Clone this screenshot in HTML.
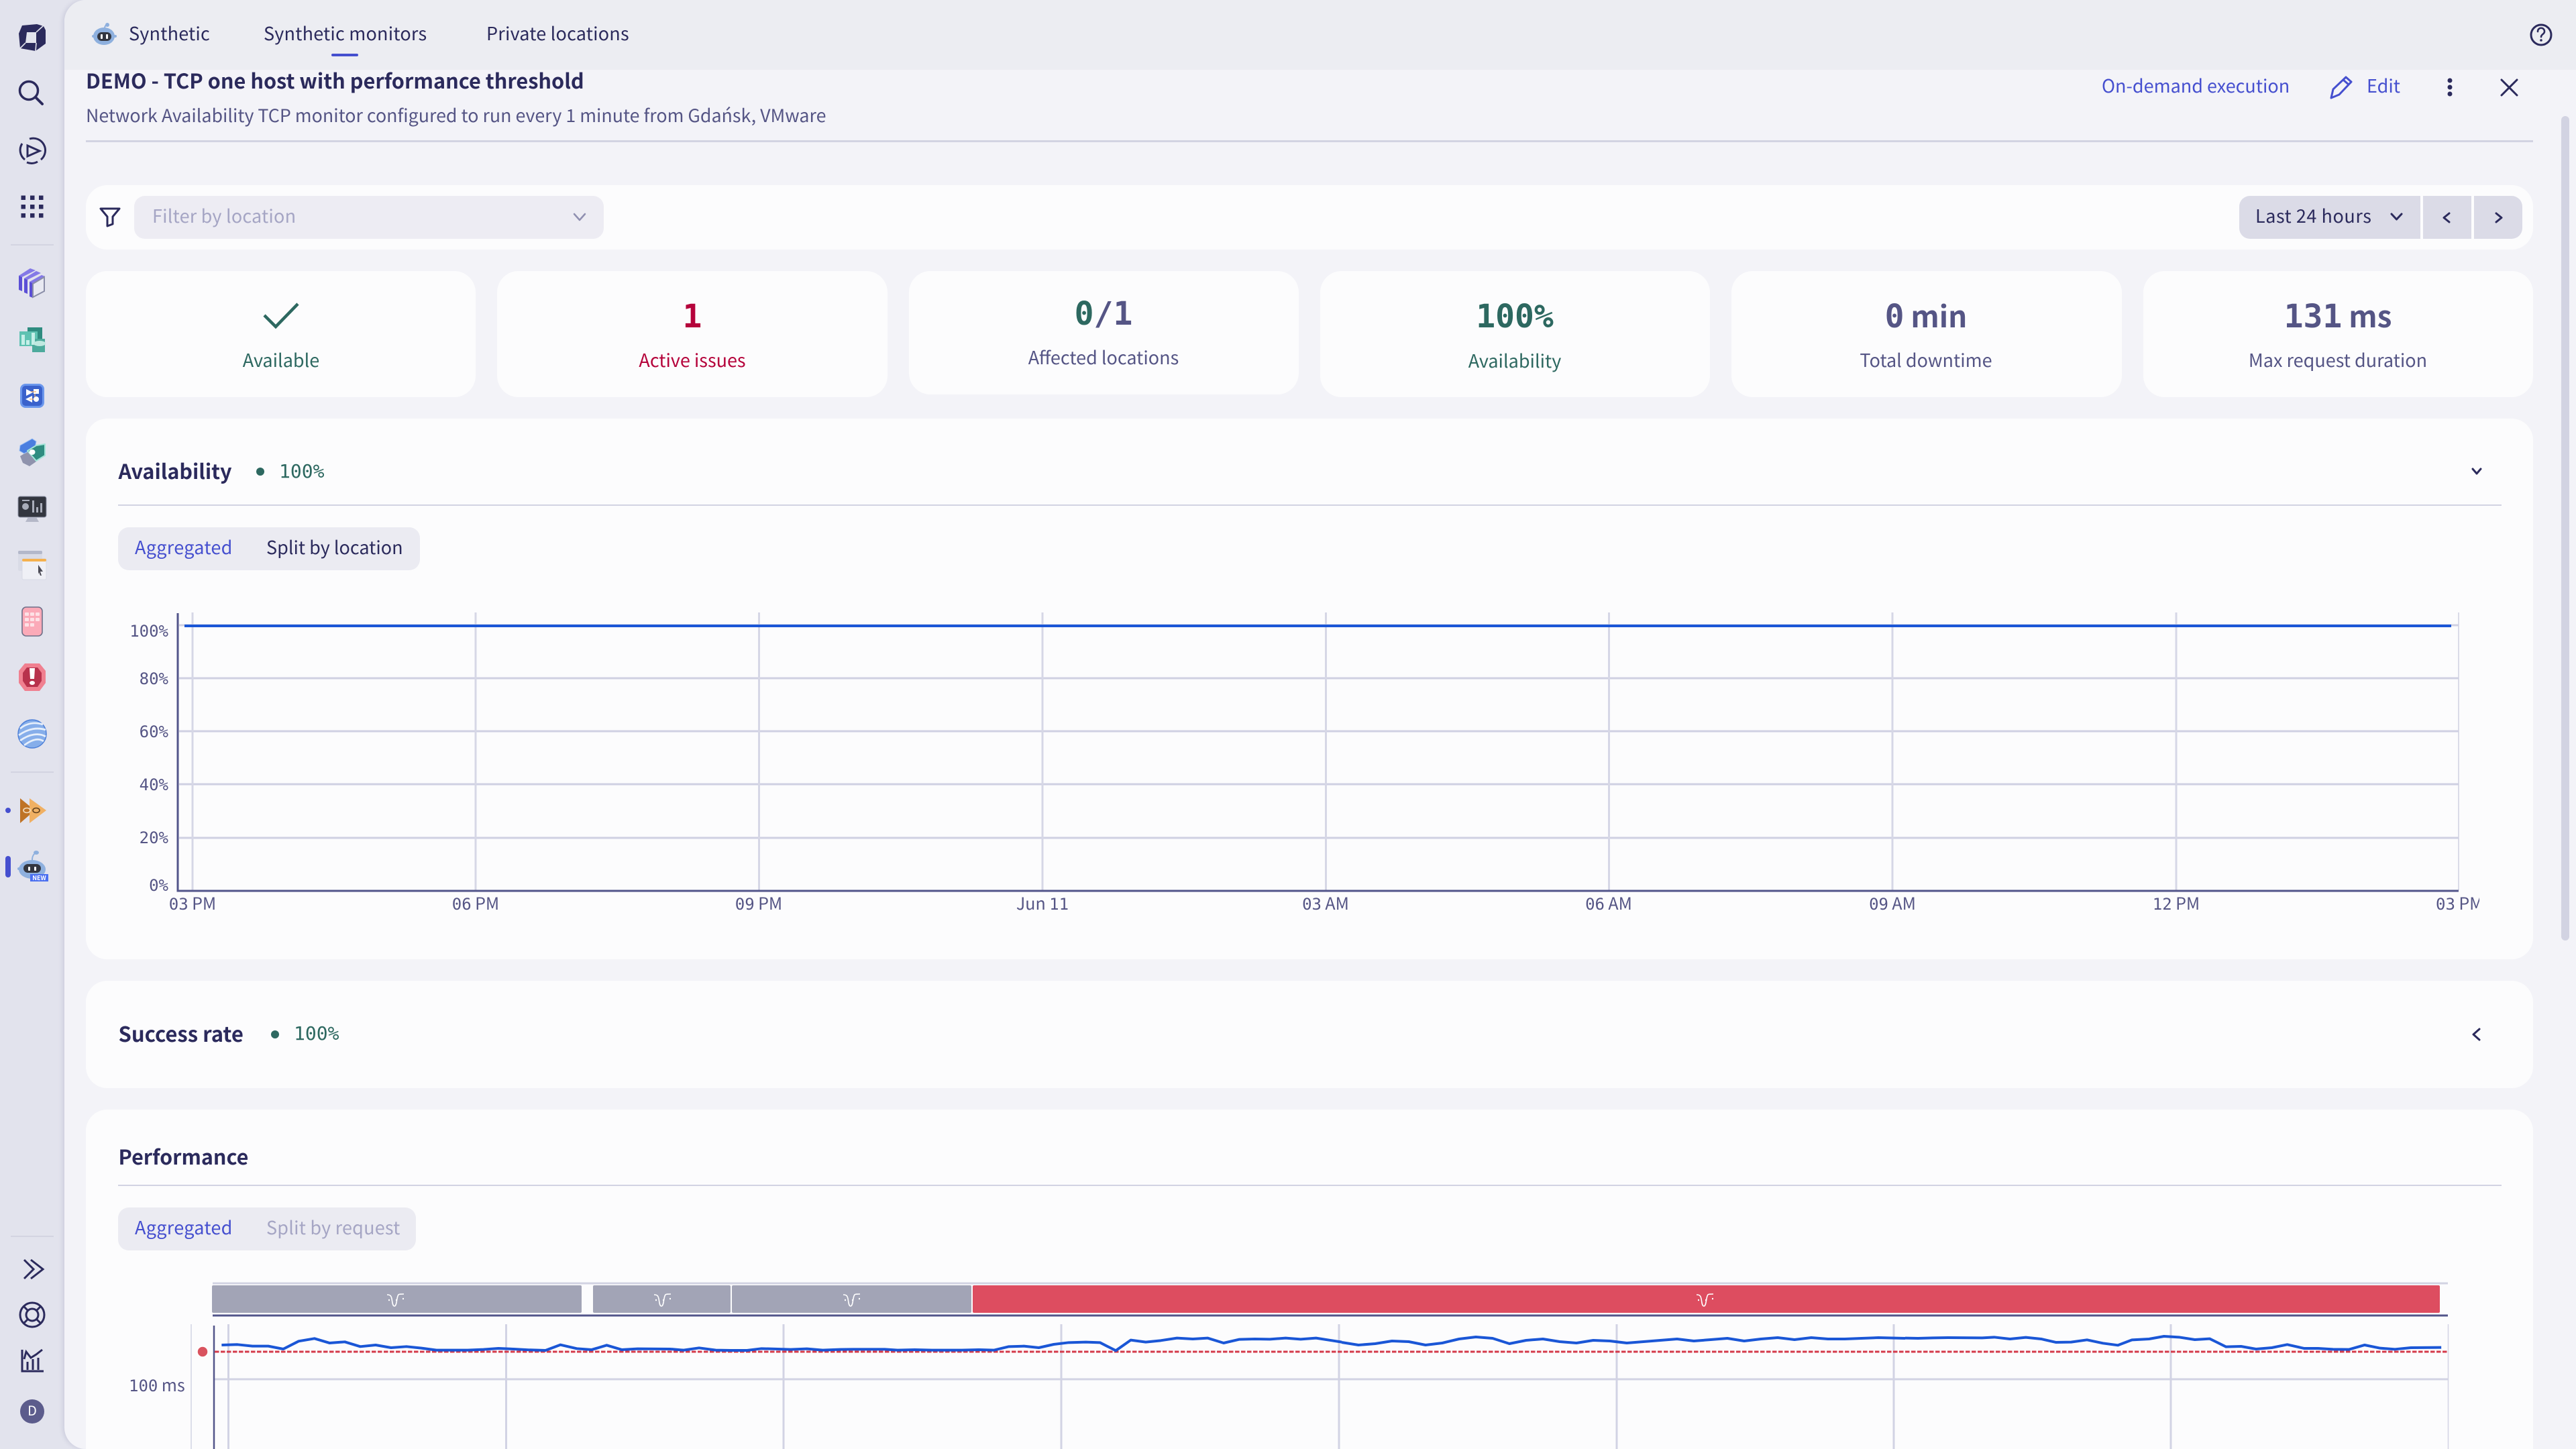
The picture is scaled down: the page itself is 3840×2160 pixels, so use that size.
<!DOCTYPE html>
<html lang="en">
<head>
<meta charset="utf-8">
<title>Synthetic</title>
<style>
html,body{margin:0;padding:0;width:3840px;height:2160px;overflow:hidden;background:#e2e3ed}
body{position:relative;font-family:"Noto Sans CJK JP","Liberation Sans",sans-serif;color:#2b2a5c}
.a{position:absolute}
#main{position:absolute;left:96px;top:0;width:3744px;height:2160px;background:#f3f3f8;border-radius:32px 0 0 32px;box-shadow:-3px 0 6px rgba(80,80,130,.13);overflow:hidden}
#top{position:absolute;left:96px;top:0;width:3744px;height:104px;background:#ecedf2;border-top-left-radius:32px}
.c{position:absolute;background:#fcfcfd;border-radius:32px}
.t{position:absolute;white-space:nowrap;line-height:36px;height:40px;font-size:27px}
.ctr{text-align:center;width:600px}
.b{font-weight:700}
.m{font-family:"DejaVu Sans Mono",monospace}
.p{color:#555585}.g{color:#2d6860}.r{color:#b5033b}.l{color:#454fcf}.d{color:#2b2a5c}.q{color:#a5a5c4}
.val{font-family:"DejaVu Sans Mono",monospace;font-weight:700;font-size:48px;line-height:60px;height:60px;word-spacing:-19px}
.al{font-family:"DejaVu Sans Mono",monospace;font-size:24px;line-height:30px;height:30px;color:#555585;word-spacing:-9px}
.al span,.val span.w{font-family:"Noto Sans CJK JP","Liberation Sans",sans-serif;line-height:0}
.al span{font-size:25px}
.val span.w{font-size:44px}
.pill{position:absolute;background:#ebebf2;border-radius:16px}
svg{position:absolute;overflow:visible}
</style>
</head>
<body>
<div id="main"></div>
<div id="top"></div>

<!-- cards -->
<div class="c" style="left:128px;top:276px;width:3648px;height:96px"></div>
<div class="a" style="left:200px;top:292px;width:700px;height:64px;background:#edecf3;border-radius:16px"></div>
<div class="a" style="left:3338px;top:292px;width:270px;height:64px;background:#dbdbe7;border-radius:16px 0 0 16px"></div>
<div class="a" style="left:3612px;top:292px;width:72px;height:64px;background:#dbdbe7"></div>
<div class="a" style="left:3688px;top:292px;width:72px;height:64px;background:#dbdbe7;border-radius:0 16px 16px 0"></div>
<div class="c" style="left:128px;top:404px;width:581.330px;height:188px"></div>
<div class="c" style="left:741.330px;top:404px;width:581.330px;height:188px"></div>
<div class="c" style="left:1354.670px;top:404px;width:581.330px;height:184px"></div>
<div class="c" style="left:1968px;top:404px;width:581.330px;height:188px"></div>
<div class="c" style="left:2581.330px;top:404px;width:581.330px;height:188px"></div>
<div class="c" style="left:3194.670px;top:404px;width:581.330px;height:188px"></div>
<div class="c" style="left:128px;top:624px;width:3648px;height:806px"></div>
<div class="c" style="left:128px;top:1462px;width:3648px;height:160px"></div>
<div class="a" style="left:128px;top:1654px;width:3648px;height:506px;background:#fcfcfd;border-radius:32px 32px 0 0"></div>
<div class="a" style="left:176px;top:752px;width:3553px;height:2px;background:#d2d3e2"></div>
<div class="a" style="left:176px;top:1766px;width:3553px;height:2px;background:#d2d3e2"></div>
<div class="pill" style="left:176px;top:786px;width:450px;height:64px"></div>
<div class="pill" style="left:176px;top:1800px;width:444px;height:64px"></div>
<div class="a" style="left:128px;top:209px;width:3648px;height:3px;background:#d2d3e2"></div>
<div class="a" style="left:3818px;top:173px;width:12px;height:1229px;background:#d2d3e2;border-radius:6px"></div>
<div class="a" style="left:494px;top:80px;width:40px;height:4px;background:#454fcf;border-radius:2px"></div>
<div class="a" style="left:382px;top:697px;width:12px;height:12px;border-radius:50%;background:#2d6860"></div>
<div class="a" style="left:404px;top:1536px;width:12px;height:12px;border-radius:50%;background:#2d6860"></div>

<svg style="left:0;top:0" width="3840" height="2160" viewBox="0 0 3840 2160">
  <!-- availability grid -->
  <g stroke="#cfd0e2" stroke-width="3" fill="none">
    <path d="M267 932H3665M267 1011H3665M267 1090H3665M267 1169H3665M267 1249H3665"/>
    <path stroke="#d6d7e6" d="M287 913V1327M709 913V1327M1131.500 913V1327M1554 913V1327M1976.500 913V1327M2398.500 913V1327M2821 913V1327M3244 913V1327"/>
    <path stroke-width="1.500" d="M3665 913V1327"/>
  </g>
  <path d="M265 914V1328H3665" fill="none" stroke="#52558a" stroke-width="3"/>
  <path d="M275 933H3654" stroke="#1a56d6" stroke-width="4"/>

  <!-- performance track -->
  <path d="M317 1913H3649" stroke="#d2d3e2" stroke-width="3"/>
  <rect x="316" y="1916" width="551" height="41" rx="2" fill="#a2a4b6"/>
  <rect x="884" y="1916" width="205" height="41" rx="2" fill="#a2a4b6"/>
  <rect x="1091" y="1916" width="357" height="41" rx="2" fill="#a2a4b6"/>
  <rect x="1450" y="1916" width="2187" height="41" rx="2" fill="#dd4d60"/>
  <path d="M317 1961H3649" stroke="#52558a" stroke-width="3"/>
  <g fill="none" stroke="#fff" stroke-width="1.600">
    <g><path d="M577 1930c4 0 6 1 7 6s1 11 4 11c4 0 3-14 6-17 1-1 3-1 8-1"/><path d="M579 1938h2M590 1938h2M600 1936h2" stroke-width="2.200"/></g>
    <g transform="translate(398 0)"><path d="M577 1930c4 0 6 1 7 6s1 11 4 11c4 0 3-14 6-17 1-1 3-1 8-1"/><path d="M579 1938h2M590 1938h2M600 1936h2" stroke-width="2.200"/></g>
    <g transform="translate(680 0)"><path d="M577 1930c4 0 6 1 7 6s1 11 4 11c4 0 3-14 6-17 1-1 3-1 8-1"/><path d="M579 1938h2M590 1938h2M600 1936h2" stroke-width="2.200"/></g>
    <g transform="translate(1952 0)"><path d="M577 1930c4 0 6 1 7 6s1 11 4 11c4 0 3-14 6-17 1-1 3-1 8-1"/><path d="M579 1938h2M590 1938h2M600 1936h2" stroke-width="2.200"/></g>
  </g>

  <!-- performance chart -->
  <g stroke="#d2d3e4" fill="none">
    <path stroke-width="1.500" d="M285 1974V2160M3649.500 1974V2160"/>
    <path stroke-width="3" d="M340.500 1974V2160M754.500 1974V2160M1168 1974V2160M1582 1974V2160M1996 1974V2160M2410 1974V2160M2823 1974V2160M3236 1974V2160"/>
    <path stroke-width="3" d="M320 2056H3650"/>
  </g>
  <path d="M319 1976V2160" stroke="#52558a" stroke-width="2.500"/>
  <path d="M320 2015H3650" stroke="#d43a4a" stroke-width="3" stroke-dasharray="6.500 2.500"/>
  <circle cx="302" cy="2015" r="8" fill="#d9535f" stroke="#fff" stroke-width="1.500"/>
  <g fill="none" stroke="#1a56d6" stroke-width="4" stroke-linejoin="round">
    <polyline vector-effect="non-scaling-stroke" transform="translate(0 1780) scale(.6378 .3333)" points="518,675 555,673 590,680 627,680 662,693 698,658 735,646 770,666 806,661 842,682 878,675 914,687 950,682 985,689 1020,698 1057,698 1093,698 1130,695 1165,690 1200,693 1238,697 1275,699 1310,674 1348,691 1383,696 1418,676 1453,696 1490,692 1568,693"/>
    <polyline vector-effect="non-scaling-stroke" transform="translate(1000 1900) scale(.6378 .3333)" points="0,333 30,338 66,328 105,338 140,339 178,339 212,331 250,333 280,335 318,332 355,338 395,335 430,334 500,334 530,338 570,336 610,338 680,338 720,336 755,338 790,322 825,320 860,327 895,312 930,304 970,302 1003,304 1040,340 1075,293 1110,302 1145,295 1183,284 1220,288 1255,284 1292,306 1328,290 1365,288 1400,289 1437,284 1472,289 1508,284 1545,295 1568,302"/>
    <polyline points="2000,2001 2025,2005 2050,2003 2075,1999 2100,2000 2125,2005 2150,2002 2175,1996 2200,1993 2225,1995 2250,2003 2275,1998 2300,1996 2325,2000 2350,2002 2375,1998 2400,1999 2425,2002 2450,2000 2475,1998 2500,1996 2525,1999 2550,1997 2575,1995 2600,1999 2625,1996 2650,1994 2675,1997 2700,1994 2725,1996 2750,1996 2775,1995 2800,1994 2840,1995"/>
    <polyline vector-effect="non-scaling-stroke" transform="translate(2840 1860) scale(.6378 .3333)" points="0,404 30,405 65,403 100,402 180,403 208,400 245,408 282,401 318,408 352,423 388,422 425,412 462,427 497,436 530,412 570,408 605,396 640,400 677,411 712,407 750,443 785,441 820,453 857,447 893,433 932,450 965,450 1000,454 1037,455 1074,435 1110,449 1145,454 1182,447 1253,446"/>
  </g>

  <!-- stat check -->
  <path d="M394 470L411 487L444 453" fill="none" stroke="#2d6860" stroke-width="4.500"/>

  <!-- line icons in main -->
  <g fill="none" stroke="#2b2a5c" stroke-width="3" stroke-linecap="round" stroke-linejoin="round">
    <path d="M150 311H178L168 323V334L160 337V323Z" stroke-linecap="butt" stroke-width="3"/>
    <path d="M3565 319L3572.500 327L3580 319"/>
    <path d="M3651 318L3643 324.500L3651 331"/>
    <path d="M3721 318L3729 324.500L3721 331"/>
    <path d="M3686 699L3692 706L3698 699"/>
    <path d="M3696 1534L3687 1542L3696 1550"/>
    <path d="M3729 119L3752 142M3752 119L3729 142"/>
    <circle cx="3788" cy="52" r="15"/>
    <path d="M3783 47c0-7 10-7 10 0 0 4-5 4-5 8" stroke-width="2.600"/>
  </g>
  <circle cx="3788" cy="60" r="1.800" fill="#2b2a5c"/>
  <path d="M856 319L864 328L872 319" fill="none" stroke="#8f8fb0" stroke-width="2.500" stroke-linecap="round" stroke-linejoin="round"/>
  <g fill="#2b2a5c"><circle cx="3652" cy="120" r="3.500"/><circle cx="3652" cy="130" r="3.500"/><circle cx="3652" cy="140" r="3.500"/></g>
  <g fill="none" stroke="#454fcf" stroke-width="3" stroke-linejoin="round">
    <path d="M3475 146L3478 133L3497 115L3505 122L3487 141Z"/>
    <path d="M3493 119L3501 126"/>
  </g>

  <!-- tab robot -->
  <path d="M156 42c0-3 1-3 3-6" fill="none" stroke="#8eb0de" stroke-width="2"/>
  <circle cx="160" cy="37" r="3" fill="#8eb0de"/>
  <ellipse cx="155" cy="54" rx="16" ry="13" fill="#8eb0de"/>
  <circle cx="139" cy="54" r="2" fill="#8eb0de"/><circle cx="172" cy="54" r="2" fill="#8eb0de"/>
  <rect x="145" y="48" width="21" height="13" rx="6.500" fill="#33363f"/>
  <rect x="150" y="51" width="3" height="7" rx="1" fill="#fff"/><rect x="158" y="51" width="3" height="7" rx="1" fill="#fff"/>

  <!-- sidebar line icons -->
  <path fill-rule="evenodd" fill="#2b2a5c" d="M33 38L55 36L65 39L68 45V65L53 76L30 72L28 50ZM40 48L38 64H54V48Z"/>
  <path d="M54 48L65 38M38 64L29 73M54 64L53 76" stroke="#e2e3ed" stroke-width="1.600"/>
  <g fill="none" stroke="#2b2a5c" stroke-width="3.500">
    <circle cx="43" cy="135" r="13.500"/>
    <path d="M53 145L63 155" stroke-width="4" stroke-linecap="round"/>
    <path d="M33 214A18 18 0 0 0 37 238M44 207A18 18 0 0 1 61 238M40 242A18 18 0 0 0 56 241" stroke-width="3"/>
    <path d="M41 217L59 225L41 233Z" stroke-width="3"/>
    <path d="M36 1878L50 1892L36 1906M46 1878L64 1892L46 1906" stroke-width="3"/>
    <circle cx="48" cy="1960" r="18" stroke-width="3"/>
    <circle cx="48" cy="1960" r="9" stroke-width="3"/>
    <path d="M35 1947L41 1953M61 1947L55 1953M35 1973L41 1967M61 1973L55 1967" stroke-width="3"/>
    <path d="M33 2012V2044H65" stroke-width="3"/>
    <path d="M36 2026L39 2015L46 2024L54 2019L63 2012" stroke-width="3"/>
    <path d="M41 2042V2030M49 2042V2026M57 2042V2024" stroke-width="3"/>
  </g>
  <g fill="#2b2a5c">
    <rect x="31.500" y="291.500" width="6.500" height="6.500"/><rect x="45" y="291.500" width="6.500" height="6.500"/><rect x="58" y="291.500" width="6.500" height="6.500"/>
    <rect x="31.500" y="305" width="6.500" height="6.500"/><rect x="45" y="305" width="6.500" height="6.500"/><rect x="58" y="305" width="6.500" height="6.500"/>
    <rect x="31.500" y="318" width="6.500" height="6.500"/><rect x="45" y="318" width="6.500" height="6.500"/><rect x="58" y="318" width="6.500" height="6.500"/>
  </g>
  <path d="M16 365H80M16 1151H80M16 1843H80" stroke="#d3d4e1" stroke-width="2"/>
  <circle cx="48" cy="2104" r="18" fill="#5c5c8c"/>
  <!-- active markers -->
  <circle cx="12" cy="1208" r="4" fill="#454fcf"/>
  <rect x="8" y="1276" width="8" height="32" rx="4" fill="#454fcf"/>

  <!-- app icon 1: purple frames -->
  <path d="M28 411L45 400L53 403L33 413Z" fill="#8479e6"/>
  <path d="M28 411L33 413V434L28 432Z" fill="#5b4fd6"/>
  <path d="M36 415L54 404L61 407L41 417Z" fill="#8479e6"/>
  <path d="M36 415L41 417V438L36 436Z" fill="#5b4fd6"/>
  <path d="M44 420L62 410L67 412L49 422Z" fill="#8479e6"/>
  <path d="M44 420L49 422V444L44 442Z" fill="#5b4fd6"/>
  <path d="M49 423L66 413V434L49 443Z" fill="#e8e9f2" stroke="#8a8ea8" stroke-width="2"/>
  <!-- app icon 2: teal charts -->
  <rect x="41" y="488" width="22" height="26" fill="#2f8c80"/>
  <rect x="29" y="494" width="27" height="22" fill="#5fc2b2"/>
  <rect x="48" y="505" width="19" height="20" fill="#4caa9c"/>
  <rect x="32" y="499" width="5" height="15" fill="#c5efe8"/><rect x="39" y="507" width="5" height="7" fill="#c5efe8"/><rect x="47" y="496" width="5" height="18" fill="#c5efe8"/>
  <ellipse cx="59" cy="512" rx="9" ry="4" fill="#bfe8e0"/>
  <!-- app icon 3: blue workflow -->
  <rect x="30" y="572" width="36" height="36" rx="8" fill="#6b97ec"/>
  <rect x="33" y="575" width="30" height="30" rx="5" fill="#3a62cc"/>
  <path d="M39 580L49 585L39 590Z" fill="#fff"/><rect x="50" y="580" width="8" height="7" fill="#fff"/>
  <path d="M48 590L38 595L48 600Z" fill="#fff"/><ellipse cx="54" cy="595" rx="4" ry="4" fill="#fff"/>
  <path d="M46 584H54M52 587V592M44 595H50" stroke="#f6b26b" stroke-width="1.200"/>
  <!-- app icon 4: pills -->
  <path d="M30 680L46 670L56 674L54 688L44 695L34 690Z" fill="#8f93ad"/>
  <path d="M30 664L48 654L54 658L52 668L36 676L29 672Z" fill="#4a7ee0" stroke="#9cc0f4" stroke-width="1"/>
  <path d="M41 672L54 664L67 662V679L54 687Z" fill="#2f8c80" stroke="#a4e4d8" stroke-width="2" stroke-linejoin="round"/>
  <ellipse cx="48" cy="674" rx="4.500" ry="4" fill="#fff"/>
  <!-- app icon 5: monitor -->
  <rect x="27" y="740" width="42" height="31" rx="3" fill="#33363f" stroke="#9095a8" stroke-width="1"/>
  <path d="M42 771H54L58 778H38Z" fill="#b5b8c8"/>
  <ellipse cx="38" cy="755" rx="5" ry="5" fill="#a9adba"/><rect x="33" y="745" width="11" height="2" fill="#a9adba"/>
  <rect x="48" y="746" width="3" height="18" fill="#a9adba"/><rect x="54" y="756" width="3" height="8" fill="#a9adba"/><rect x="60" y="750" width="3" height="14" fill="#a9adba"/>
  <!-- app icon 6: windows -->
  <rect x="27" y="821" width="36" height="30" rx="2" fill="#d9dbe6"/>
  <rect x="27" y="821" width="36" height="5" rx="2" fill="#b3b8ca"/>
  <rect x="33" y="833" width="36" height="31" rx="2" fill="#eff0f6" stroke="#d2d5e2" stroke-width=".8"/>
  <rect x="33" y="833" width="36" height="4" rx="2" fill="#f5b14e"/>
  <path d="M57 842L64 852L60 852L62 858L60 858L58 853L57 856Z" fill="#4a4a55"/>
  <!-- app icon 7: pink phone -->
  <rect x="33" y="905" width="30" height="43" rx="6" fill="#fbaab8" stroke="#6e7088" stroke-width="1.600"/>
  <g fill="#fde1e6"><rect x="37" y="913" width="6" height="5" rx="1"/><rect x="45" y="913" width="6" height="5" rx="1"/><rect x="53" y="913" width="6" height="5" rx="1"/><rect x="37" y="921" width="6" height="5" rx="1"/><rect x="45" y="921" width="6" height="5" rx="1"/><rect x="53" y="921" width="6" height="5" rx="1"/><rect x="37" y="929" width="6" height="5" rx="1"/><rect x="45" y="929" width="6" height="5" rx="1"/></g>
  <!-- app icon 8: red octagon -->
  <path d="M37 989H59L68 1000V1018L59 1030H37L28 1018V1000Z" fill="#f08090"/>
  <path d="M40 995H56L62 1003V1015L56 1024H40L34 1015V1003Z" fill="#b8324c"/>
  <path d="M44 996H52L51 1012H45Z" fill="#fff"/><ellipse cx="48" cy="1018" rx="4" ry="3" fill="#fff"/>
  <!-- app icon 9: globe -->
  <ellipse cx="48" cy="1094" rx="21" ry="21" fill="#86aeea" stroke="#4c7fd8" stroke-width="1.500"/>
  <g fill="none" stroke="#e6effb" stroke-width="2.800">
    <path d="M30 1086C40 1078 52 1076 64 1080M28 1096C42 1086 56 1084 68 1088M30 1104C44 1094 58 1092 68 1098M36 1111C48 1102 58 1100 65 1105"/>
  </g>
  <!-- app icon 10: orange -->
  <path d="M30 1190L52 1208L30 1227Z" fill="#bf7326"/>
  <path d="M44 1190L69 1208L44 1227Z" fill="#f0b063"/>
  <g fill="none" stroke="#5f3f1c" stroke-width="1.600"><ellipse cx="40" cy="1208" rx="5" ry="3.500" stroke="#f3e0c4"/><ellipse cx="54" cy="1208" rx="5" ry="3.500"/></g>
  <!-- app icon 11: robot -->
  <path d="M48 1282c0-6 2-9 6-11" fill="none" stroke="#8eb0de" stroke-width="2"/>
  <ellipse cx="54" cy="1271" rx="4" ry="3" fill="#8eb0de"/>
  <ellipse cx="48" cy="1296" rx="20" ry="14" fill="#8eb0de"/>
  <circle cx="28" cy="1295" r="2" fill="#8eb0de"/>
  <rect x="35" y="1288" width="26" height="13" rx="6.500" fill="#33363f"/>
  <rect x="42" y="1292" width="3" height="6" rx="1" fill="#fff"/><rect x="51" y="1292" width="3" height="6" rx="1" fill="#fff"/>
  <rect x="45" y="1303" width="27" height="11" fill="#4a6ff0"/>
</svg>

<!-- tabs -->
<div class="t d" style="left:192px;top:31px;letter-spacing:.2px">Synthetic</div>
<div class="t d" style="left:393px;top:31px;letter-spacing:.2px">Synthetic monitors</div>
<div class="t d" style="left:725px;top:31px;letter-spacing:.2px">Private locations</div>

<!-- header -->
<div class="t b d" style="left:128px;top:101px;font-size:30.700px">DEMO - TCP one host with performance threshold</div>
<div class="t p" style="left:128px;top:153px;font-size:26.800px">Network Availability TCP monitor configured to run every 1 minute from Gdańsk, VMware</div>
<div class="t l" style="left:3133px;top:109px">On-demand execution</div>
<div class="t l" style="left:3528px;top:109px">Edit</div>

<div class="t q" style="left:227px;top:303px;letter-spacing:.2px">Filter by location</div>
<div class="t d" style="left:3362px;top:303px;letter-spacing:.55px">Last 24 hours</div>

<!-- stat cards -->
<div class="t ctr g" style="left:119px;top:518px">Available</div>
<div class="t ctr val r" style="left:732px;top:442px">1</div>
<div class="t ctr r" style="left:732px;top:518px">Active issues</div>
<div class="t ctr val g" style="left:1345px;top:438px">0<span class="p">/1</span></div>
<div class="t ctr p" style="left:1345px;top:514px">Affected locations</div>
<div class="t ctr val g" style="left:1958px;top:442px">100%</div>
<div class="t ctr g" style="left:1958px;top:519px">Availability</div>
<div class="t ctr val p" style="left:2571px;top:442px">0 <span class="w">min</span></div>
<div class="t ctr p" style="left:2571px;top:518px">Total downtime</div>
<div class="t ctr val p" style="left:3185px;top:442px">131 <span class="w">ms</span></div>
<div class="t ctr p" style="left:3185px;top:518px">Max request duration</div>

<!-- availability -->
<div class="t b d" style="left:176.500px;top:683px;font-size:30.500px">Availability</div>
<div class="t m g" style="left:416px;top:685px;font-size:28px">100%</div>
<div class="t l" style="left:201px;top:797px;letter-spacing:.3px">Aggregated</div>
<div class="t d" style="left:397px;top:797px">Split by location</div>

<!-- axis labels -->
<div class="t al" style="left:151px;top:926px;width:100px;text-align:right">100%</div>
<div class="t al" style="left:151px;top:997px;width:100px;text-align:right">80%</div>
<div class="t al" style="left:151px;top:1076px;width:100px;text-align:right">60%</div>
<div class="t al" style="left:151px;top:1155px;width:100px;text-align:right">40%</div>
<div class="t al" style="left:151px;top:1234px;width:100px;text-align:right">20%</div>
<div class="t al" style="left:151px;top:1305px;width:100px;text-align:right">0%</div>
<div class="t al" style="left:187px;top:1333px;width:200px;text-align:center">03 <span>PM</span></div>
<div class="t al" style="left:609px;top:1333px;width:200px;text-align:center">06 <span>PM</span></div>
<div class="t al" style="left:1031px;top:1333px;width:200px;text-align:center">09 <span>PM</span></div>
<div class="t al" style="left:1454px;top:1333px;width:200px;text-align:center"><span>Jun</span> 11</div>
<div class="t al" style="left:1876px;top:1333px;width:200px;text-align:center">03 <span>AM</span></div>
<div class="t al" style="left:2298px;top:1333px;width:200px;text-align:center">06 <span>AM</span></div>
<div class="t al" style="left:2721px;top:1333px;width:200px;text-align:center">09 <span>AM</span></div>
<div class="t al" style="left:3144px;top:1333px;width:200px;text-align:center">12 <span>PM</span></div>
<div class="t al" style="left:3631px;top:1333px;width:65px;overflow:hidden">03 <span>PM</span></div>

<!-- success rate -->
<div class="t b d" style="left:176.500px;top:1522px;font-size:31px">Success rate</div>
<div class="t m g" style="left:438px;top:1523px;font-size:28px">100%</div>

<!-- performance -->
<div class="t b d" style="left:176.500px;top:1705px;font-size:30.500px">Performance</div>
<div class="t l" style="left:201px;top:1811px;letter-spacing:.3px">Aggregated</div>
<div class="t q" style="left:397px;top:1811px;letter-spacing:.2px">Split by request</div>
<div class="t al" style="left:192px;top:2051px">100 <span>ms</span></div>

<div class="t b" style="left:45px;top:1303px;width:27px;height:11px;line-height:11px;font-size:9px;color:#fff;text-align:center">NEW</div>
<div class="t" style="left:18px;top:2084px;width:60px;text-align:center;color:#fff;font-size:20px">D</div>
</body>
</html>
